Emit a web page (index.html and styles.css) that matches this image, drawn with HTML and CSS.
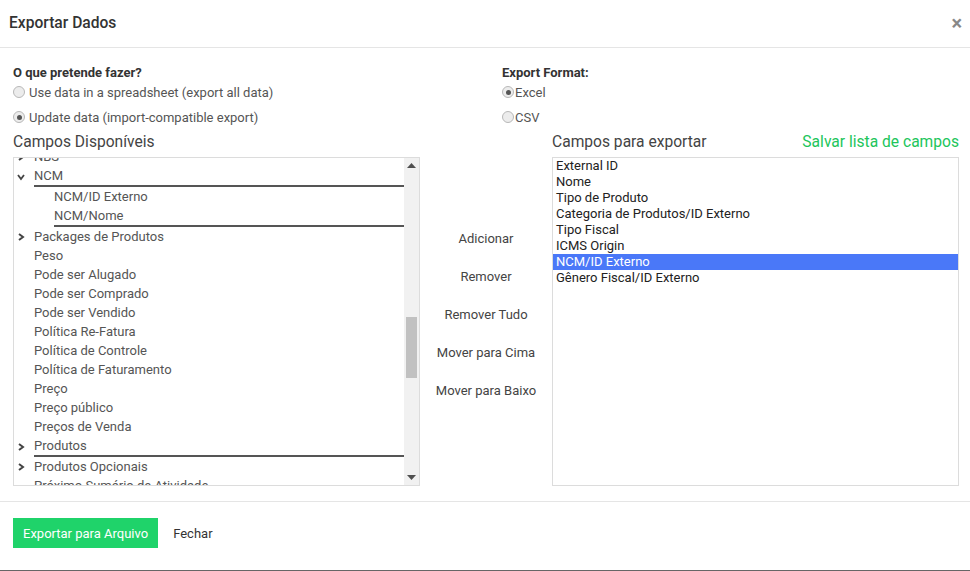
FILE: index.html
```html
<!DOCTYPE html>
<html lang="pt">
<head>
<meta charset="utf-8">
<title>Exportar Dados</title>
<link rel="stylesheet" href="styles.css">
</head>
<body>
<div class="modal">
  <div class="modal-header">
    <h4 class="modal-title">Exportar Dados</h4>
    <span class="close">×</span>
  </div>
  <div class="modal-body">
    <div class="options">
      <div class="opt-col">
        <div class="opt-label">O que pretende fazer?</div>
        <div class="radio-row"><span class="radio"></span>Use data in a spreadsheet (export all data)</div>
        <div class="radio-row"><span class="radio checked"></span>Update data (import-compatible export)</div>
      </div>
      <div class="opt-col">
        <div class="opt-label">Export Format:</div>
        <div class="radio-row tight"><span class="radio checked"></span>Excel</div>
        <div class="radio-row tight"><span class="radio"></span>CSV</div>
      </div>
    </div>
    <div class="fields">
      <div class="field-col">
        <div class="col-title"><span>Campos Disponíveis</span></div>
        <div class="box left-box">
          <div class="tree">
            <div class="row first"><span class="chev"><svg width="8" height="8" viewBox="0 0 8 8"><polyline points="2,1 6,4 2,7" fill="none" stroke="#444" stroke-width="2"/></svg></span><span class="lbl">NBS</span></div>
            <div class="row"><span class="chev"><svg width="8" height="8" viewBox="0 0 8 8"><polyline points="1,2 4,6 7,2" fill="none" stroke="#444" stroke-width="1.8"/></svg></span><span class="lbl open">NCM</span></div>
            <div class="children">
              <div class="row child"><span class="lbl">NCM/ID Externo</span></div>
              <div class="row child"><span class="lbl">NCM/Nome</span></div>
            </div>
            <div class="row"><span class="chev"><svg width="8" height="8" viewBox="0 0 8 8"><polyline points="2,1 6,4 2,7" fill="none" stroke="#444" stroke-width="2"/></svg></span><span class="lbl">Packages de Produtos</span></div>
            <div class="row"><span class="chev"></span><span class="lbl">Peso</span></div>
            <div class="row"><span class="chev"></span><span class="lbl">Pode ser Alugado</span></div>
            <div class="row"><span class="chev"></span><span class="lbl">Pode ser Comprado</span></div>
            <div class="row"><span class="chev"></span><span class="lbl">Pode ser Vendido</span></div>
            <div class="row"><span class="chev"></span><span class="lbl">Política Re-Fatura</span></div>
            <div class="row"><span class="chev"></span><span class="lbl">Política de Controle</span></div>
            <div class="row"><span class="chev"></span><span class="lbl">Política de Faturamento</span></div>
            <div class="row"><span class="chev"></span><span class="lbl">Preço</span></div>
            <div class="row"><span class="chev"></span><span class="lbl">Preço público</span></div>
            <div class="row"><span class="chev"></span><span class="lbl">Preços de Venda</span></div>
            <div class="row"><span class="chev"><svg width="8" height="8" viewBox="0 0 8 8"><polyline points="2,1 6,4 2,7" fill="none" stroke="#444" stroke-width="2"/></svg></span><span class="lbl open">Produtos</span></div>
            <div class="row"><span class="chev"><svg width="8" height="8" viewBox="0 0 8 8"><polyline points="2,1 6,4 2,7" fill="none" stroke="#444" stroke-width="2"/></svg></span><span class="lbl">Produtos Opcionais</span></div>
            <div class="row"><span class="chev"></span><span class="lbl">Próximo Sumário de Atividade</span></div>
          </div>
          <div class="scrollbar">
            <div class="sb-btn"><svg width="9" height="5" viewBox="0 0 9 5"><polygon points="0,5 4.5,0 9,5" fill="#505050"/></svg></div>
            <div class="sb-space"></div>
            <div class="sb-thumb"></div>
            <div class="sb-rest"></div>
            <div class="sb-btn"><svg width="9" height="5" viewBox="0 0 9 5"><polygon points="0,0 9,0 4.5,5" fill="#505050"/></svg></div>
          </div>
        </div>
      </div>
      <div class="actions">
        <div class="action">Adicionar</div>
        <div class="action">Remover</div>
        <div class="action">Remover Tudo</div>
        <div class="action">Mover para Cima</div>
        <div class="action">Mover para Baixo</div>
      </div>
      <div class="field-col">
        <div class="col-title"><span>Campos para exportar</span><span class="save">Salvar lista de campos</span></div>
        <div class="box right-box">
          <div class="opt">External ID</div>
          <div class="opt">Nome</div>
          <div class="opt">Tipo de Produto</div>
          <div class="opt">Categoria de Produtos/ID Externo</div>
          <div class="opt">Tipo Fiscal</div>
          <div class="opt">ICMS Origin</div>
          <div class="opt selected">NCM/ID Externo</div>
          <div class="opt">Gênero Fiscal/ID Externo</div>
        </div>
      </div>
    </div>
  </div>
  <div class="modal-footer">
    <button class="btn-primary">Exportar para Arquivo</button>
    <button class="btn-link">Fechar</button>
  </div>
</div>
</body>
</html>
```
FILE: styles.css
```css
* { box-sizing: border-box; }
html, body { margin: 0; padding: 0; background: #fff; }
body { font-family: Roboto, "Liberation Sans", sans-serif; font-size: 13px; color: #555; }

.modal { height: 571px; border-bottom: 1px solid #666; display: flex; flex-direction: column; }

.modal-header {
  height: 48px;
  border-bottom: 1px solid #e5e5e5;
  display: flex; align-items: center; justify-content: space-between;
  padding: 0 8px 2px 9px;
}
.modal-title { margin: 0; font-size: 15.6px; font-weight: 500; color: #333; }
.close { font-size: 20px; font-weight: 700; color: #888; line-height: 1; }

.modal-body { padding: 18px 11px 15px 13px; }

.options { display: grid; grid-template-columns: 489px 1fr; }
.opt-label { font-size: 13px; font-weight: 700; color: #333; line-height: 14px; margin-bottom: 2px; }
.radio-row { display: flex; align-items: center; height: 20px; margin-bottom: 5px; color: #555; }
.radio {
  width: 12px; height: 12px; border-radius: 50%;
  border: 1px solid #b8b8b8; background: #ececec;
  margin-right: 4px; display: inline-flex; align-items: center; justify-content: center;
}
.radio.checked::after { content: ""; width: 5px; height: 5px; border-radius: 50%; background: #555; }
.radio-row.tight .radio { margin-right: 1px; }

.fields { display: grid; grid-template-columns: 407px 132px 407px; }
.col-title {
  height: 25px; line-height: 20px; font-size: 15.6px; color: #444;
  display: flex; justify-content: space-between;
}
.save { color: #21c55b; }

.box { height: 329px; border: 1px solid #dcdcdc; }
.left-box { display: flex; }
.tree { flex: 1; overflow: hidden; }
.row { display: flex; height: 19px; line-height: 19px; color: #555; }
.row.first { margin-top: -11px; }
.chev { width: 20px; display: flex; align-items: center; justify-content: flex-start; padding-left: 3px; }
.lbl { flex: 1; white-space: nowrap; }
.lbl.open { border-bottom: 2px solid #555; height: 21px; }
.row:has(.lbl.open) { height: 21px; }
.children { margin-left: 40px; border-bottom: 2px solid #555; }

.scrollbar { width: 15px; background: #f1f1f1; display: flex; flex-direction: column; }
.sb-btn { height: 15px; display: flex; align-items: center; justify-content: center; }
.sb-space { height: 144px; }
.sb-thumb { height: 61px; margin: 0 2px; background: #c1c1c1; }
.sb-rest { flex: 1; }

.actions { padding-top: 88px; display: flex; flex-direction: column; align-items: center; }
.action { height: 38px; line-height: 38px; color: #444; }

.opt { height: 16px; line-height: 16px; padding-left: 3px; color: #222; white-space: nowrap; }
.opt.selected { background: #4a78f8; color: #fff; }

.modal-footer { border-top: 1px solid #e5e5e5; padding: 16px 13px; display: flex; align-items: center; }
.btn-primary {
  height: 30px; padding: 0 10px; border: none; background: #1fd36a; color: #fff;
  font-family: inherit; font-size: 13px;
}
.btn-link { background: none; border: none; padding: 0; margin-left: 15px; font-family: inherit; font-size: 13px; color: #333; }
```
